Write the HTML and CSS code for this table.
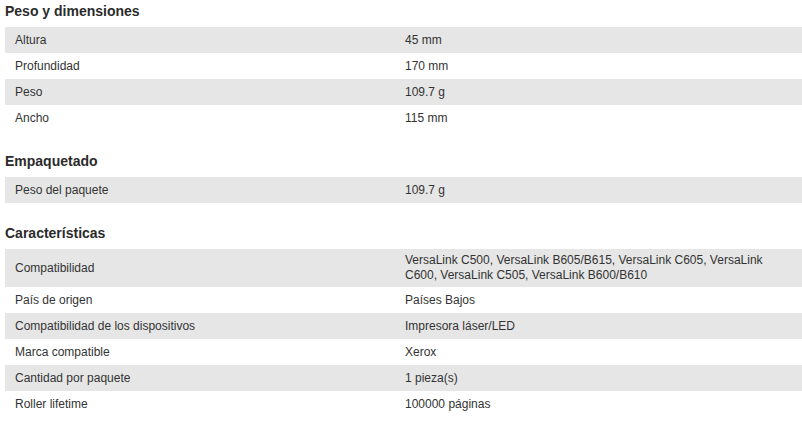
FILE: index.html
```html
<!DOCTYPE html>
<html lang="es">
<head>
<meta charset="utf-8">
<title>Especificaciones</title>
<link rel="stylesheet" href="styles.css">
</head>
<body>
<div class="specs">
  <section class="group">
    <h2 class="group-title">Peso y dimensiones</h2>
    <div class="rows">
      <div class="row"><div class="cell key">Altura</div><div class="cell val">45 mm</div></div>
      <div class="row"><div class="cell key">Profundidad</div><div class="cell val">170 mm</div></div>
      <div class="row"><div class="cell key">Peso</div><div class="cell val">109.7 g</div></div>
      <div class="row"><div class="cell key">Ancho</div><div class="cell val">115 mm</div></div>
    </div>
  </section>
  <section class="group">
    <h2 class="group-title">Empaquetado</h2>
    <div class="rows">
      <div class="row"><div class="cell key">Peso del paquete</div><div class="cell val">109.7 g</div></div>
    </div>
  </section>
  <section class="group">
    <h2 class="group-title">Características</h2>
    <div class="rows">
      <div class="row"><div class="cell key">Compatibilidad</div><div class="cell val">VersaLink C500, VersaLink B605/B615, VersaLink C605, VersaLink C600, VersaLink C505, VersaLink B600/B610</div></div>
      <div class="row"><div class="cell key">País de origen</div><div class="cell val">Países Bajos</div></div>
      <div class="row"><div class="cell key">Compatibilidad de los dispositivos</div><div class="cell val">Impresora láser/LED</div></div>
      <div class="row"><div class="cell key">Marca compatible</div><div class="cell val">Xerox</div></div>
      <div class="row"><div class="cell key">Cantidad por paquete</div><div class="cell val">1 pieza(s)</div></div>
      <div class="row"><div class="cell key">Roller lifetime</div><div class="cell val">100000 páginas</div></div>
    </div>
  </section>
</div>
</body>
</html>
```
FILE: styles.css
```css
html, body {
  margin: 0;
  padding: 0;
  background: #ffffff;
}
body {
  font-family: "Liberation Sans", Arial, sans-serif;
  color: #333333;
  font-size: 12px;
}
.specs {
  padding-left: 5px;
  display: flex;
  flex-direction: column;
  gap: 19px;
}
.group-title {
  margin: 0 0 8px 0;
  padding-top: 3px;
  font-size: 14px;
  line-height: 16px;
  font-weight: bold;
  color: #2b2b2b;
}
.rows {
  display: flex;
  flex-direction: column;
}
.row {
  display: grid;
  grid-template-columns: 390px 1fr;
  min-height: 26px;
}
.row:nth-child(odd) {
  background: #e6e6e6;
}
.cell {
  display: flex;
  align-items: center;
  padding: 4px 10px;
  line-height: 15px;
}
```
